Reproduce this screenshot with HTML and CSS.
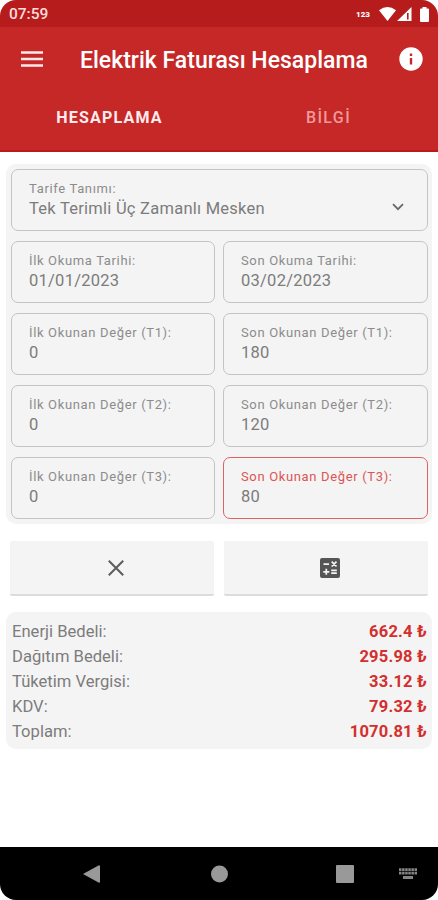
FILE: index.html
```
<!DOCTYPE html>
<html lang="tr">
<head>
<meta charset="UTF-8" />
<meta name="viewport" content="width=device-width, initial-scale=1.0" />
<title>Elektrik Faturası Hesaplama</title>
<link rel="stylesheet" href="styles.css">
</head>
<body>
  <div class="screen">
    <div class="status-bar">
      <span class="clock">07:59</span>
      <span class="status-num">123</span>
      <svg class="wifi" width="17" height="14" viewBox="0 0 17 14"><path d="M0 3.200Q8.500-3.200 17 3.200L8.500 14Z" fill="#fff"/></svg>
      <svg class="signal" width="15" height="14" viewBox="0 0 15 14"><path d="M0 14L14.500 0V14Z" fill="#fff"/><path d="M10 6h1.600v6.500H10z" fill="#b71c1c"/></svg>
      <svg class="battery" width="9" height="15" viewBox="0 0 9 15"><path d="M2.500 0h4v1.500H8q1 0 1 1v11.500q0 1-1 1H1q-1 0-1-1V2.500q0-1 1-1h1.500z" fill="#fff"/></svg>
    </div>

    <header class="app-bar">
      <div class="toolbar">
        <svg class="menu-icon" width="22" height="16" viewBox="0 0 22 16"><path d="M0 1.500h22M0 8h22M0 14.500h22" stroke="#fff" stroke-opacity=".9" stroke-width="2.500"/></svg>
        <h1>Elektrik Faturası Hesaplama</h1>
        <svg class="info-icon" width="24" height="24" viewBox="0 0 24 24"><circle cx="12" cy="12" r="11.700" fill="#fff"/><path d="M10.800 6.500h2.400v2.400h-2.400zM10.800 11h2.400v6.500h-2.400z" fill="#c62828"/></svg>
      </div>
      <nav class="tabs">
        <div class="tab active">HESAPLAMA</div>
        <div class="tab">BİLGİ</div>
      </nav>
    </header>

    <main>
      <section class="form-card">
        <div class="field wide">
          <label>Tarife Tanımı:</label>
          <span>Tek Terimli Üç Zamanlı Mesken</span>
          <svg class="chevron" width="12" height="8" viewBox="0 0 12 8"><path d="M1 1.200L6 6.200L11 1.200" fill="none" stroke="#666" stroke-width="1.700"/></svg>
        </div>
        <div class="field"><label>İlk Okuma Tarihi:</label><span>01/01/2023</span></div>
        <div class="field"><label>Son Okuma Tarihi:</label><span>03/02/2023</span></div>
        <div class="field"><label>İlk Okunan Değer (T1):</label><span>0</span></div>
        <div class="field"><label>Son Okunan Değer (T1):</label><span>180</span></div>
        <div class="field"><label>İlk Okunan Değer (T2):</label><span>0</span></div>
        <div class="field"><label>Son Okunan Değer (T2):</label><span>120</span></div>
        <div class="field"><label>İlk Okunan Değer (T3):</label><span>0</span></div>
        <div class="field focused"><label>Son Okunan Değer (T3):</label><span>80</span></div>
      </section>

      <div class="actions">
        <button aria-label="Temizle">
          <svg width="16" height="16" viewBox="0 0 16 16"><path d="M.8.8L15.200 15.200M15.200.8L.8 15.200" stroke="#5c5c5c" stroke-width="2"/></svg>
        </button>
        <button aria-label="Hesapla">
          <svg width="20" height="20" viewBox="0 0 20 20">
            <rect width="20" height="20" rx="2" fill="#555"/>
            <path d="M3.500 6.200h5.500M6.300 10.800v6M3.300 13.800h6M11.200 12.400h5.600M11.200 15.200h5.600M11.700 3.700l4.800 4.800M16.500 3.700l-4.800 4.800" stroke="#f4f4f4" stroke-width="1.700"/>
          </svg>
        </button>
      </div>

      <section class="results">
        <div class="row"><span>Enerji Bedeli:</span><b>662.4 ₺</b></div>
        <div class="row"><span>Dağıtım Bedeli:</span><b>295.98 ₺</b></div>
        <div class="row"><span>Tüketim Vergisi:</span><b>33.12 ₺</b></div>
        <div class="row"><span>KDV:</span><b>79.32 ₺</b></div>
        <div class="row"><span>Toplam:</span><b>1070.81 ₺</b></div>
      </section>
    </main>

    <div class="nav-bar">
      <svg class="nav-back" width="17" height="18" viewBox="0 0 17 18"><path d="M0 9L15.500.4q1.500-.6 1.500.8v15.600q0 1.400-1.500.8z" fill="#999"/></svg>
      <svg class="nav-home" width="17" height="18" viewBox="0 0 17 18"><circle cx="8.500" cy="9" r="8.500" fill="#999"/></svg>
      <svg class="nav-recent" width="18" height="18" viewBox="0 0 18 18"><rect width="18" height="18" rx="1" fill="#999"/></svg>
      <svg class="nav-keyboard" width="18" height="12" viewBox="0 0 18 12"><path d="M0 1.600h18M0 5.200h18" stroke="#858585" stroke-width="2.700" stroke-dasharray="2.500 .6"/><path d="M4 8h10v3H4z" fill="#858585"/></svg>
    </div>
  </div>
</body>
</html>
```
FILE: styles.css
```
* {
  box-sizing: border-box;
}
body {
  margin: 0;
  background: #fff;
  font-family: Roboto, sans-serif;
  color: #7c7c7c;
}
svg {
  display: block;
  flex: none;
}
.screen {
  display: flex;
  flex-direction: column;
  width: 438px;
  height: 900px;
  background: #fff;
  border-radius: 16px;
  overflow: hidden;
}
.status-bar {
  display: flex;
  align-items: center;
  height: 27px;
  padding: 1px 9px 0 9px;
  background: #b71c1c;
  color: #fff;
}
.clock {
  flex: 1;
  font-size: 15.5px;
  font-weight: 500;
  color: #ffdcdc;
}
.status-num {
  margin-right: 9px;
  font-size: 8px;
  font-weight: 900;
}
.signal {
  margin: 0 8px 0 1px;
}
.app-bar {
  height: 125px;
  background: #c62828;
  border-bottom: 2px solid #b71c1c;
  color: #fff;
}
.toolbar {
  display: flex;
  align-items: center;
  height: 63px;
  padding: 0 15px 0 21px;
}
h1 {
  flex: 1;
  margin: 3px 0 0 37px;
  font-size: 23px;
  font-weight: 500;
  white-space: nowrap;
}
.tabs {
  display: flex;
  height: 52px;
}
.tab {
  flex: 1;
  text-align: center;
  line-height: 55px;
  font-size: 16px;
  font-weight: 500;
  letter-spacing: 1.4px;
  color: #ef9a9a;
}
.tab.active {
  font-weight: 700;
  letter-spacing: 1.2px;
  color: #ffebee;
}
main {
  flex: 1;
  padding: 12px 6px 0;
}
.form-card {
  display: grid;
  grid-template-columns: 204px 205px;
  gap: 10px 8px;
  height: 360px;
  padding: 5px 5px 5px 5px;
  background: #f4f4f4;
  border-radius: 10px;
}
.field {
  display: flex;
  flex-direction: column;
  position: relative;
  height: 62px;
  padding: 10px 17px;
  border: 1.5px solid #c4c4c4;
  border-radius: 7px;
}
.wide {
  grid-column: 1 / 3;
}
.field label {
  line-height: 17px;
  font-size: 13px;
  letter-spacing: 0.65px;
  color: #8c8c8c;
}
.field span {
  line-height: 23px;
  font-size: 16.5px;
  letter-spacing: 0.25px;
}
.focused {
  border-color: #dc6464;
}
.focused label {
  color: #dc5555;
}
.chevron {
  position: absolute;
  right: 23px;
  top: 33px;
}
.actions {
  display: flex;
  gap: 10px;
  padding: 17px 4px 0 4px;
}
button {
  display: flex;
  flex: 1;
  align-items: center;
  justify-content: center;
  height: 55px;
  padding: 0 0 0 8px;
  border: none;
  border-bottom: 2px solid #dcdcdc;
  border-radius: 2px;
  background: #f4f4f4;
}
.results {
  height: 137px;
  margin-top: 16px;
  padding: 7px 5px 7px 6px;
  background: #f4f4f4;
  border-radius: 10px;
}
.row {
  display: flex;
  justify-content: space-between;
  line-height: 25px;
  font-size: 16.6px;
}
.row b {
  font-size: 16.5px;
  font-weight: 700;
  letter-spacing: 0.2px;
  color: #d32f2f;
}
.nav-bar {
  display: flex;
  align-items: center;
  height: 53px;
  padding-left: 83px;
  background: #000;
}
.nav-home {
  margin-left: 111px;
}
.nav-recent {
  margin-left: 108px;
}
.nav-keyboard {
  margin-left: 45px;
}
```
